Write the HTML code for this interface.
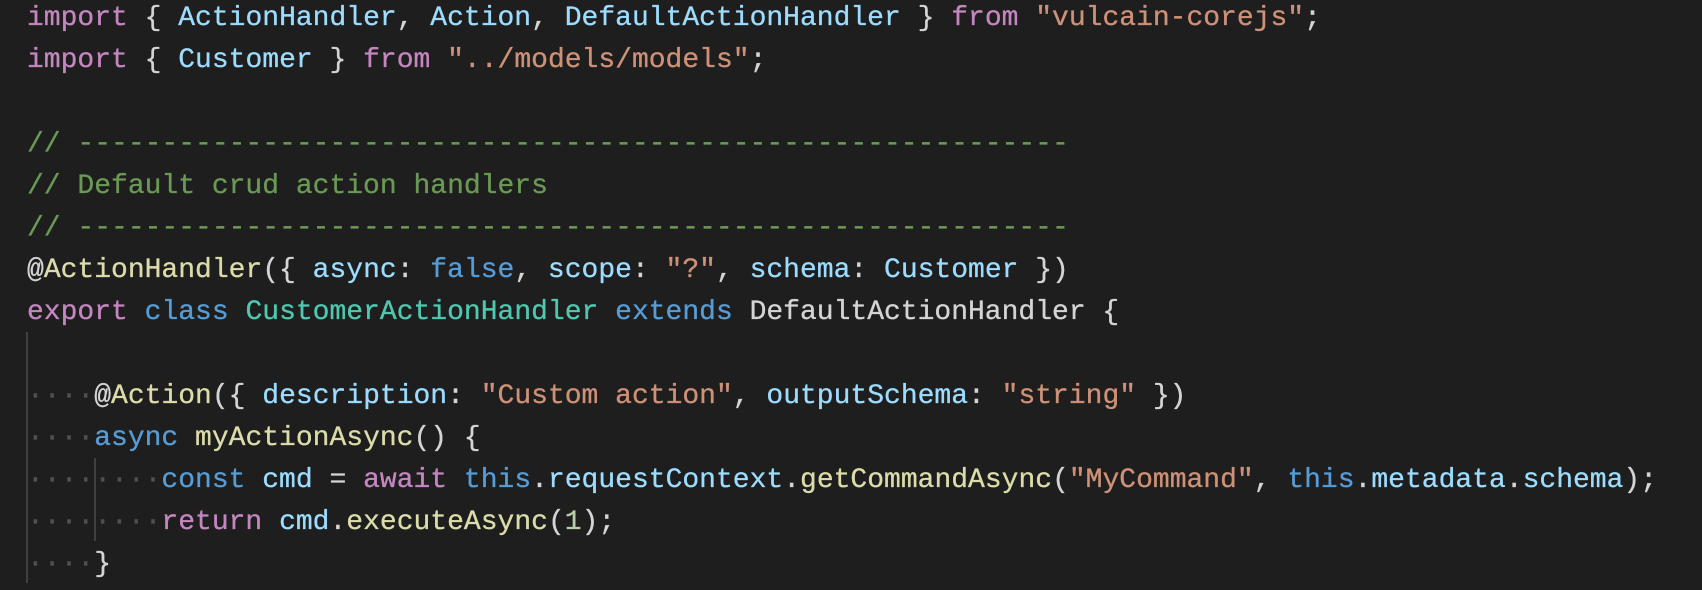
<!DOCTYPE html>
<html><head><meta charset="utf-8"><style>
html,body{margin:0;padding:0;background:#1e1e1e;width:1702px;height:590px;overflow:hidden}
pre{margin:0;position:absolute;left:27px;top:-2px;font-family:"Liberation Mono",monospace;font-size:28px;line-height:42px;color:#d4d4d4;white-space:pre;-webkit-text-stroke:0.3px currentColor}
.k{color:#c586c0}.v{color:#9cdcfe}.s{color:#ce9178}.c{color:#6a9955}.b{color:#569cd6}.t{color:#4ec9b0}.f{color:#dcdcaa}.n{color:#b5cea8}.d{color:#505050}
.g{position:absolute;width:2px;background:#404040}
</style></head><body>
<div class="g" style="left:26px;top:332px;height:251px"></div>
<div class="g" style="left:94px;top:458px;height:83px"></div>
<pre><span class="k">import</span> { <span class="v">ActionHandler</span>, <span class="v">Action</span>, <span class="v">DefaultActionHandler</span> } <span class="k">from</span> <span class="s">"vulcain-corejs"</span>;
<span class="k">import</span> { <span class="v">Customer</span> } <span class="k">from</span> <span class="s">"../models/models"</span>;

<span class="c">// -----------------------------------------------------------</span>
<span class="c">// Default crud action handlers</span>
<span class="c">// -----------------------------------------------------------</span>
@<span class="f">ActionHandler</span>({ <span class="v">async</span>: <span class="b">false</span>, <span class="v">scope</span>: <span class="s">"?"</span>, <span class="v">schema</span>: <span class="v">Customer</span> })
<span class="k">export</span> <span class="b">class</span> <span class="t">CustomerActionHandler</span> <span class="b">extends</span> DefaultActionHandler {

<span class="d">····</span>@<span class="f">Action</span>({ <span class="v">description</span>: <span class="s">"Custom action"</span>, <span class="v">outputSchema</span>: <span class="s">"string"</span> })
<span class="d">····</span><span class="b">async</span> <span class="f">myActionAsync</span>() {
<span class="d">········</span><span class="b">const</span> <span class="v">cmd</span> = <span class="k">await</span> <span class="b">this</span>.<span class="v">requestContext</span>.<span class="f">getCommandAsync</span>(<span class="s">"MyCommand"</span>, <span class="b">this</span>.<span class="v">metadata</span>.<span class="v">schema</span>);
<span class="d">········</span><span class="k">return</span> <span class="v">cmd</span>.<span class="f">executeAsync</span>(<span class="n">1</span>);
<span class="d">····</span>}</pre>
</body></html>
